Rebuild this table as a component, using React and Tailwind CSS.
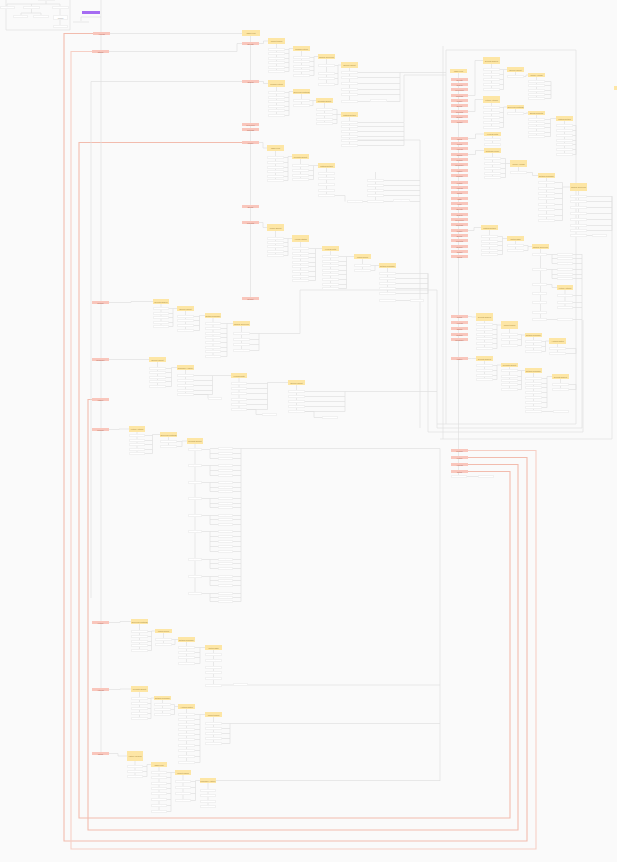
import React from 'react';

const N = [];
const L = [];
const WORDS = ['Overview','Settings','Profile','Billing','Reports','Export','Import','Users','Roles','Access','Status','Details','Summary','History','Search','Filters','Actions','Notes','Tags','Files','Events','Orders'];
let wi = 0;
const word = () => WORDS[(wi++) % WORDS.length];
const node = (x, y, w, h, t) => N.push({ x, y, w, h, t, label: t === 'p' || w < 6 ? '' : t === 'y' ? word() + ' ' + word() : word() });
const ln = (d, c = 'g') => L.push({ d, c });

function chain(src, specs, end) {
  specs.forEach((s, i) => {
    const [x, y, w, h, kids] = s;
    const my = y + h / 2;
    if (i === 0) {
      if (src) {
        const [sx, sy] = src;
        const mx = (sx + x) / 2;
        ln(`M${sx} ${sy} H${mx} V${my} H${x}`);
      }
    } else {
      const p = specs[i - 1];
      const px = p[0] + p[2];
      const bx = (px + x) / 2;
      const ys = p[4].map((k) => k + 1.5);
      ys.forEach((k) => ln(`M${px} ${k} H${bx}`));
      const lo = Math.min(...ys, my);
      const hi = Math.max(...ys, my);
      ln(`M${bx} ${lo} V${hi}`);
      ln(`M${bx} ${my} H${x}`);
    }
    if (kids.length) ln(`M${x + w / 2} ${y + h} V${kids[kids.length - 1] + 1}`);
    node(x, y, w, h, 'y');
    kids.forEach((k) => node(x, k, w, 3, 'w'));
  });
  if (end) {
    const p = specs[specs.length - 1];
    const px = p[0] + p[2];
    const ys = p[4].map((k) => k + 1.5);
    ys.forEach((k) => ln(`M${px} ${k} H${end}`));
    ln(`M${end} ${Math.min(...ys)} V${Math.max(...ys)}`);
  }
}

/* ---------- top-left box ---------- */
ln('M6 0 V30 H70 V0');
ln('M46 0 V4');
ln('M7 4 H60');
ln('M7 4 V6');
ln('M31.5 4 V6');
ln('M60 4 V6');
ln('M31.5 9 V13 H21 V15');
ln('M31.5 13 H41 V15');
ln('M60 9 V15');
ln('M60 20 V25');
node(38, -1, 17, 2, 'w');
node(0, 6, 15, 3, 'w');
node(23, 6, 17, 3, 'w');
node(52, 6, 17, 3, 'w');
node(13, 15, 15, 3, 'w');
node(33, 15, 16, 3, 'w');
node(53, 15, 15, 5, 'w');
node(53, 25, 15, 3, 'w');

/* ---------- salmon routes ---------- */
ln('M93 33.5 H64 V841 H527 V457.5 H467', 's');
ln('M92 51.5 H71 V849 H536 V450.5 H467', 's2');
ln('M242 142.5 H79 V818 H510 V471.5 H467', 's');
ln('M92 399.5 H88 V830 H518 V464.5 H467', 's');

/* ---------- left spine ---------- */
ln('M101 0 V753');
ln('M101 17 H81 V21');
node(82, 11, 18, 3, 'p');
node(73, 21, 16, 2, 'w');
ln('M91 81.5 V598');
ln('M91 81.5 H242');
ln('M110 33.5 H242');
ln('M109 51.5 H237 V43.5 H242');
[32, 50, 301, 358, 398, 428, 621, 688, 752].forEach((y, i) => node(i === 0 ? 93 : 92, y, 17, 3, 's'));

/* ---------- second spine ---------- */
ln('M250.5 36 V298');
node(242, 30, 18, 6, 'y');
[42, 80, 123, 128, 141, 205, 221, 297].forEach((y) => node(242, y, 17, 3, 's'));

/* C1 */
chain([259, 43.5], [
  [268, 38, 17, 6, [48, 52, 57, 61, 66, 70]],
  [293, 46, 17, 5, [56, 60, 65, 69, 74]],
  [318, 54, 17, 5, [64, 72, 77, 83]],
  [341, 62, 17, 6, [71, 76, 82, 88, 93, 100]],
], 400);
node(370, 99, 17, 3, 'w');
ln('M400 72.5 H446');

/* C2 */
chain([259, 81.5], [
  [268, 80, 17, 7, [91, 96, 100, 105, 109, 114]],
  [293, 89, 17, 5, [99, 104]],
  [316, 98, 17, 5, [108, 113, 118, 122]],
  [341, 112, 17, 5, [121, 125, 130, 135, 139, 144]],
], 404);
ln('M404 75 V122');
ln('M404 75 H446');

/* C3 */
chain([259, 142.5], [
  [267, 145, 17, 6, [156, 161, 166, 170, 175, 179]],
  [292, 154, 17, 5, [164, 169, 174, 178]],
  [318, 163, 17, 5, [172, 177, 183, 189, 194]],
]);
ln('M335 195.5 H345 V201.5');
node(347, 200, 16, 3, 'w');
ln('M375.5 172 V201');
ln('M363 201.5 H367');
[179, 184, 189, 194, 200].forEach((k) => { node(367, k, 17, 3, 'w'); ln(`M384 ${k + 1.5} H420`); });
node(393, 199, 17, 3, 'w');
ln('M420 140 V428');
ln('M358 140 H420');

/* C4 */
chain([259, 222.5], [
  [267, 224, 17, 7, [237, 241, 245, 250, 254]],
  [292, 235, 17, 7, [247, 252, 256, 261, 265, 270, 275, 279]],
  [322, 246, 17, 5, [255, 260, 264, 269, 273, 278, 283, 287]],
  [354, 254, 17, 5, [264, 269]],
  [379, 263, 17, 5, [272, 277, 282, 287, 292]],
], 428);
ln('M396 300.5 H410');
node(379, 299, 17, 3, 'w');
node(410, 299, 14, 3, 'w');
ln('M428 273.5 V432 H583 V320');

/* L1 */
chain([109, 302.5], [
  [153, 299, 16, 5, [307, 312, 316, 321, 325]],
  [177, 306, 17, 5, [315, 319, 324, 329]],
  [205, 313, 16, 5, [322, 327, 332, 336, 341, 346, 350, 355]],
  [233, 321, 17, 5, [332, 338, 343, 349]],
], 259);
ln('M259 333.5 H300 V290 H437 V428');

/* L2 */
chain([109, 359.5], [
  [149, 357, 17, 5, [367, 371, 376, 380, 385]],
  [177, 365, 17, 5, [374, 379, 384, 389, 393]],
  [231, 373, 16, 5, [382, 387, 392, 398, 403, 408]],
  [288, 380, 17, 5, [390, 395, 400, 405, 410]],
], 345);
ln('M194 394.5 H208 V398.5');
node(208, 397, 14, 3, 'w');
ln('M247 409.5 H256 V414.5 H262');
node(262, 413, 15, 3, 'w');
ln('M305 411.5 H314 V417.5 H322');
node(322, 416, 16, 3, 'w');
ln('M345 391.5 H437');

/* L3 with tree */
chain([109, 429.5], [
  [129, 426, 16, 6, [434, 439, 443, 448, 452]],
  [160, 432, 17, 5, [440, 445]],
  [187, 438, 16, 6, []],
]);
ln('M195 444 V593');
[
  [448, [447, 452, 457]],
  [464, [464, 469, 474]],
  [481, [481, 486, 490]],
  [497, [497, 502, 506]],
  [514, [514, 518, 523]],
  [530, [530, 535, 540, 545, 550]],
  [558, [558, 562, 567]],
  [575, [575, 579, 584]],
  [592, [592, 596, 600]],
].forEach(([ly, ks]) => {
  node(188, ly, 14, 3, 'w');
  ln(`M202 ${ly + 1.5} H210 V${ks[ks.length - 1] + 1.5}`);
  ks.forEach((k) => { ln(`M210 ${k + 1.5} H218`); node(218, k, 15, 3, 'w'); ln(`M233 ${k + 1.5} H241`); });
});
ln('M241 448.5 V601.5');
ln('M241 448.5 H440 V781');

/* L4 */
chain([109, 622.5], [
  [131, 619, 17, 5, [630, 635, 640, 644, 649]],
  [155, 629, 17, 4, [638, 643]],
  [178, 637, 17, 5, [646, 651, 656, 662]],
  [205, 645, 17, 5, [653, 659, 666, 671, 677, 684]],
]);
node(233, 683, 15, 3, 'w');
ln('M222 685 H233');
ln('M248 685 H440');

/* L5 */
chain([109, 689.5], [
  [131, 686, 17, 6, [697, 702, 707, 712, 717]],
  [154, 696, 17, 4, [703, 708, 713]],
  [178, 704, 17, 5, [713, 718, 723, 728, 733, 738, 744, 749, 755, 761]],
  [205, 712, 17, 5, [722, 727, 732, 737, 742]],
], 230);
ln('M230 723.5 H440');

/* L6 */
chain([109, 753.5], [
  [127, 751, 16, 10, [765, 770, 775]],
  [151, 762, 16, 5, [771, 776, 782, 787, 792, 798, 804, 810]],
  [175, 770, 16, 5, [780, 786, 792, 799]],
  [200, 778, 16, 5, [789, 794, 800, 805]],
]);
ln('M216 780.5 H440');

/* ---------- right column ---------- */
ln('M446 50 H576 V424 H437');
ln('M446 50 V424');
ln('M443 46 V439');
ln('M612 196 V439 H440');
ln('M582 318 V428 H437');
ln('M458.5 69 V476');
node(450, 69, 17, 4, 'y');
[78, 83, 88, 94, 99, 104, 110, 115, 120,
  137, 142, 147, 153, 158, 163, 169, 174, 181, 186, 191, 197, 202, 207, 213, 218, 223, 229, 234, 239, 245, 250, 255,
  315, 321, 327, 333, 338, 357, 449, 456, 463, 470].forEach((y) => node(451, y, 17, 3, 's'));
node(451, 475, 16, 3, 'w');
ln('M467 476.5 H478');
node(478, 475, 16, 3, 'w');

chain([467, 95.5], [
  [483, 57, 17, 7, [68, 73, 78, 83, 88]],
  [507, 67, 17, 5, [75]],
  [528, 73, 17, 4, [80, 84, 89, 93, 97]],
], 551);
chain([467, 111.5], [
  [483, 96, 17, 7, [106, 111, 116, 121, 126]],
  [507, 105, 17, 4, [112]],
  [528, 111, 17, 4, [118, 122, 126, 131, 135]],
  [556, 116, 17, 5, [124, 129, 134, 139, 143, 148, 153]],
], 576);
chain([467, 138.5], [[484, 132, 17, 4, [138, 143]]]);
chain([467, 154.5], [
  [484, 148, 17, 5, [157, 162, 167, 172, 176]],
  [510, 160, 17, 7, [171]],
  [538, 173, 17, 5, [181, 187, 192, 197, 203, 208, 214, 219]],
  [570, 183, 17, 8, [195, 200, 206, 212, 218, 224, 229]],
], 612);
node(570, 234, 17, 3, 'w');
ln('M587 235.5 H592');
node(592, 234, 15, 3, 'w');

chain([467, 230.5], [
  [481, 225, 17, 5, [235, 240, 244, 249, 253]],
  [507, 236, 17, 5, [244, 249]],
  [532, 244, 17, 5, []],
]);
ln('M540.5 249 V319');
[
  [253, [253, 257, 262]],
  [268, [268, 273, 277]],
  [283, []],
  [292, []],
  [301, []],
  [311, []],
  [318, [318]],
].forEach(([ly, ks]) => {
  node(532, ly, 15, 3, 'w');
  if (ks.length) {
    ln(`M547 ${ly + 1.5} H552 V${ks[ks.length - 1] + 1.5}`);
    ks.forEach((k) => { ln(`M552 ${k + 1.5} H557`); node(557, k, 16, 3, 'w'); ln(`M573 ${k + 1.5} H582`); });
  }
});
ln('M547 284.5 H552 V287.5 H557');
ln('M565 290 V307');
node(557, 285, 16, 5, 'y');
[294, 301, 306].forEach((k) => { node(557, k, 16, 3, 'w'); ln(`M573 ${k + 1.5} H582`); });
ln('M582 254 V318');

chain([467, 316.5], [
  [476, 313, 17, 8, [323, 328, 333, 337, 342, 347]],
  [501, 321, 17, 8, [333, 338, 344]],
  [525, 333, 17, 4, [340, 345, 350]],
  [549, 338, 17, 6, [347, 352]],
], 576);
chain([467, 358.5], [
  [476, 356, 17, 5, [364, 369, 374, 378]],
  [501, 363, 17, 4, [369, 375, 379, 383, 388]],
  [525, 368, 17, 5, [377, 382, 386, 391, 396, 401, 406]],
  [552, 374, 17, 5, [383, 388]],
], 576);
ln('M533.5 406 V410');
node(525, 410, 17, 3, 'w');
ln('M542 411.5 H553');
node(553, 410, 16, 3, 'w');
node(614, 86, 3, 4, 'y');

const STROKE = {
  g: { stroke: '#e0e0e0', w: 0.7 },
  s: { stroke: '#f2bcae', w: 1.1 },
  s2: { stroke: '#f6cfc5', w: 1.1 },
};

const CLS = {
  y: 'bg-[#fde6a5] text-[#a88a3e]',
  w: 'bg-white border border-[#f1f1f1] text-[#a3a3a3]',
  s: 'bg-[#f9c6bc] text-[#b5705f]',
  p: 'bg-[#a56cf2]',
};

export default function App() {
  return (
    <div className="relative w-[617px] h-[862px] overflow-hidden bg-[#fafafa] font-['Liberation_Sans',Arial,sans-serif]">
      <svg className="absolute left-0 top-0" width="617" height="862" viewBox="0 0 617 862">
        {L.map((l, i) => (
          <path key={i} d={l.d} fill="none" stroke={STROKE[l.c].stroke} strokeWidth={STROKE[l.c].w} />
        ))}
      </svg>
      {N.map((n, i) => (
        <div
          key={i}
          className={`absolute box-border flex items-center justify-center overflow-hidden text-center text-[2px] leading-[2px] ${CLS[n.t]}`}
          style={{ left: n.x, top: n.y, width: n.w, height: n.h }}
        >
          {n.label}
        </div>
      ))}
    </div>
  );
}
